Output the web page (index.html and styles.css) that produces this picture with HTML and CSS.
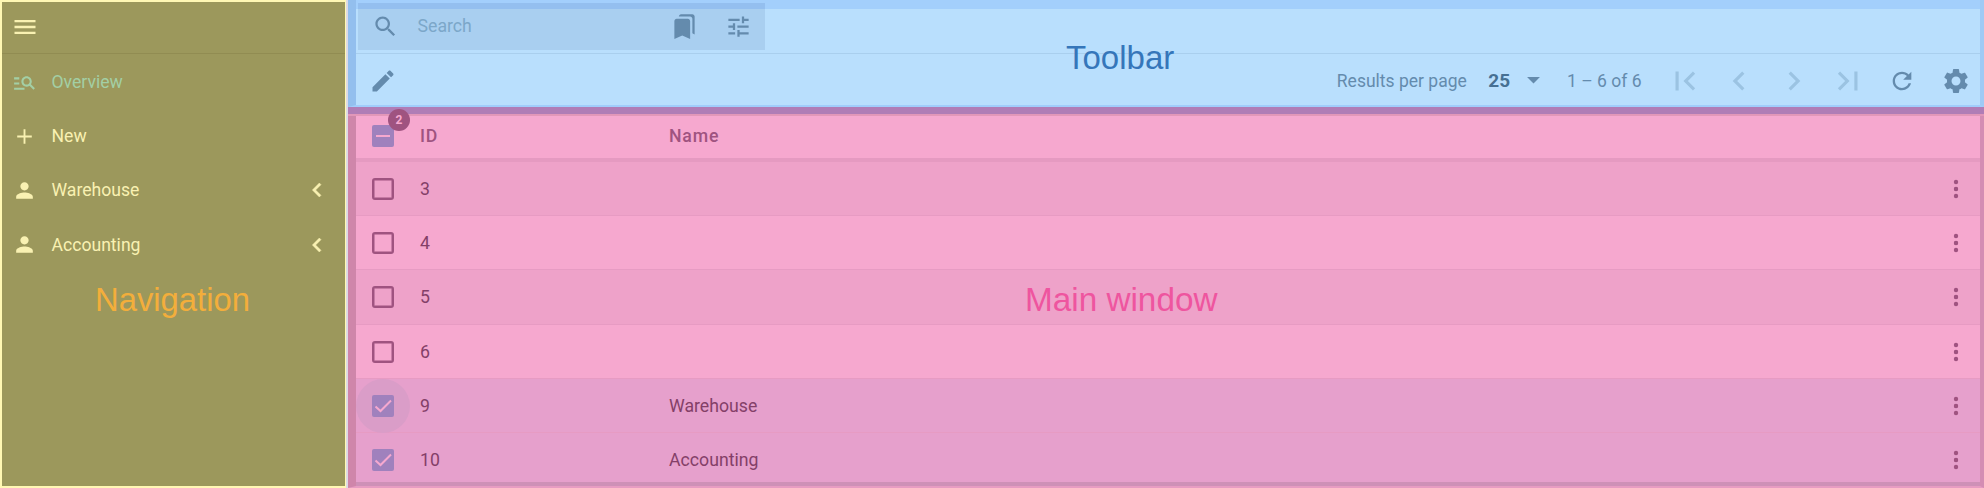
FILE: index.html
```
<!DOCTYPE html>
<html lang="en">
<head>
<meta charset="utf-8">
<title>Overview</title>
<link rel="stylesheet" href="styles.css">
</head>
<body>
<div class="app">
  <aside class="nav">
    <div class="nav-head"><svg class="icon" viewBox="0 0 24 24"><path d="M3 18h18v-2H3v2zm0-5h18v-2H3v2zm0-7v2h18V6H3z"/></svg></div>
    <nav class="nav-list">
      <a class="nav-item active"><svg class="icon" viewBox="0 0 24 24"><path d="M7 9H2V7h5v2zm0 3H2v2h5v-2zm13.600 7l-3.830-3.830c-.8.520-1.740.830-2.770.830-2.760 0-5-2.240-5-5s2.240-5 5-5 5 2.240 5 5c0 1.020-.31 1.970-.83 2.760L22 17.590 20.590 19zM17 11c0-1.650-1.350-3-3-3s-3 1.350-3 3 1.350 3 3 3 3-1.350 3-3zM2 19h10v-2H2v2z"/></svg><span>Overview</span></a>
      <a class="nav-item"><svg class="icon" viewBox="0 0 24 24"><path d="M19 12.900h-6.100V19h-1.800v-6.100H5v-1.800h6.100V5h1.800v6.100H19z"/></svg><span>New</span></a>
      <a class="nav-item"><svg class="icon" viewBox="0 0 24 24"><path d="M12 12c2.210 0 4-1.790 4-4s-1.790-4-4-4-4 1.790-4 4 1.790 4 4 4zm0 2c-2.670 0-8 1.340-8 4v2h16v-2c0-2.660-5.330-4-8-4z"/></svg><span>Warehouse</span><svg class="icon chevron" viewBox="0 0 24 24"><path d="M15.410 7.410 14 6l-6 6 6 6 1.410-1.410L10.830 12z"/></svg></a>
      <a class="nav-item"><svg class="icon" viewBox="0 0 24 24"><path d="M12 12c2.210 0 4-1.790 4-4s-1.790-4-4-4-4 1.790-4 4 1.790 4 4 4zm0 2c-2.670 0-8 1.340-8 4v2h16v-2c0-2.660-5.330-4-8-4z"/></svg><span>Accounting</span><svg class="icon chevron" viewBox="0 0 24 24"><path d="M15.410 7.410 14 6l-6 6 6 6 1.410-1.410L10.830 12z"/></svg></a>
    </nav>
    <div class="label label-nav">Navigation</div>
  </aside>
  <main class="content">
    <section class="toolbar">
      <div class="search-row">
        <div class="search">
          <svg class="icon" viewBox="0 0 24 24"><path d="M15.500 14h-.79l-.28-.27C15.410 12.590 16 11.110 16 9.500 16 5.910 13.090 3 9.500 3S3 5.910 3 9.500 5.910 16 9.500 16c1.610 0 3.090-.59 4.230-1.570l.27.28v.79l5 4.990L20.490 19l-4.990-5zm-6 0C7.010 14 5 11.990 5 9.500S7.010 5 9.500 5 14 7.010 14 9.500 11.990 14 9.500 14z"/></svg>
          <span class="placeholder">Search</span>
          <svg class="icon" viewBox="0 0 24 24"><path d="M19 18l2 1V3c0-1.100-.9-2-2-2H8.990C7.890 1 7 1.900 7 3h10c1.100 0 2 .9 2 2v13zM15 5H5c-1.100 0-2 .9-2 2v16l7-3 7 3V7c0-1.100-.9-2-2-2z"/></svg>
          <svg class="icon" viewBox="0 0 24 24"><path d="M3 17v2h6v-2H3zM3 5v2h10V5H3zm10 16v-2h8v-2h-8v-2h-2v6h2zM7 9v2H3v2h4v2h2V9H7zm14 4v-2H11v2h10zm-6-4h2V7h4V5h-4V3h-2v6z"/></svg>
        </div>
      </div>
      <div class="action-row">
        <svg class="icon edit" viewBox="0 0 24 24"><path d="M3 17.250V21h3.750L17.810 9.940l-3.750-3.750L3 17.250zM20.710 7.040c.39-.39.39-1.020 0-1.410l-2.340-2.340c-.39-.39-1.020-.39-1.410 0l-1.830 1.830 3.750 3.750 1.830-1.830z"/></svg>
        <div class="pager">
          <span class="per-page">Results per page</span>
          <strong class="size">25</strong>
          <svg class="icon caret" viewBox="0 0 24 24"><path d="M7 10l5 5 5-5z"/></svg>
          <span class="range">1 – 6 of 6</span>
          <svg class="icon big off" viewBox="0 0 24 24"><path d="M18.410 16.590L13.820 12l4.590-4.590L17 6l-6 6 6 6zM6 6h2v12H6z"/></svg>
          <svg class="icon big off" viewBox="0 0 24 24"><path d="M15.410 7.410 14 6l-6 6 6 6 1.410-1.410L10.830 12z"/></svg>
          <svg class="icon big off" viewBox="0 0 24 24"><path d="M10 6 8.590 7.410 13.170 12l-4.580 4.590L10 18l6-6z"/></svg>
          <svg class="icon big off" viewBox="0 0 24 24"><path d="M5.590 7.410L10.180 12l-4.590 4.590L7 18l6-6-6-6zM16 6h2v12h-2z"/></svg>
          <svg class="icon refresh" viewBox="0 0 24 24"><path d="M17.650 6.350C16.200 4.900 14.210 4 12 4c-4.420 0-7.990 3.580-7.990 8s3.570 8 7.990 8c3.730 0 6.840-2.550 7.730-6h-2.080c-.82 2.330-3.040 4-5.650 4-3.310 0-6-2.690-6-6s2.690-6 6-6c1.660 0 3.140.69 4.220 1.780L13 11h7V4l-2.350 2.350z"/></svg>
          <svg class="icon gear" viewBox="0 0 24 24"><path d="M19.140 12.940c.04-.3.060-.61.060-.94 0-.32-.02-.64-.07-.94l2.030-1.580c.18-.14.23-.41.120-.61l-1.920-3.320c-.12-.22-.37-.29-.59-.22l-2.390.96c-.5-.38-1.030-.7-1.620-.94l-.36-2.540c-.04-.24-.24-.41-.48-.41h-3.840c-.24 0-.43.170-.47.410l-.36 2.540c-.59.240-1.130.570-1.620.940l-2.390-.96c-.22-.08-.47 0-.59.220L2.740 8.870c-.12.210-.08.470.120.610l2.030 1.580c-.05.300-.09.630-.09.940s.02.640.07.940l-2.030 1.580c-.18.140-.23.410-.12.610l1.920 3.320c.12.220.370.290.590.220l2.390-.96c.5.380 1.030.700 1.620.940l.36 2.540c.05.240.240.410.480.410h3.840c.24 0 .44-.17.470-.41l.36-2.540c.59-.24 1.130-.56 1.620-.94l2.390.96c.22.080.470 0 .59-.22l1.920-3.320c.12-.22.070-.47-.12-.61l-2.010-1.580zM12 15.600c-1.980 0-3.600-1.620-3.600-3.600s1.620-3.600 3.600-3.600 3.600 1.620 3.600 3.600-1.620 3.600-3.600 3.600z"/></svg>
        </div>
      </div>
      <div class="label label-toolbar">Toolbar</div>
    </section>
    <section class="table">
      <div class="overlap"></div>
      <div class="row head"><div class="check"><i class="box on"><svg viewBox="0 0 22 22"><path d="M4 11h14"/></svg></i><b class="badge">2</b></div><span class="id">ID</span><span class="name">Name</span></div>
      <div class="row odd"><div class="check"><i class="box"></i></div><span class="id">3</span><span class="name"></span><i class="more"></i></div>
      <div class="row"><div class="check"><i class="box"></i></div><span class="id">4</span><span class="name"></span><i class="more"></i></div>
      <div class="row odd"><div class="check"><i class="box"></i></div><span class="id">5</span><span class="name"></span><i class="more"></i></div>
      <div class="row"><div class="check"><i class="box"></i></div><span class="id">6</span><span class="name"></span><i class="more"></i></div>
      <div class="row selected"><div class="check focus"><i class="box on"><svg viewBox="0 0 22 22"><path d="M3.500 11.500l5 4.500L19 5.500"/></svg></i></div><span class="id">9</span><span class="name">Warehouse</span><i class="more"></i></div>
      <div class="row selected last"><div class="check"><i class="box on"><svg viewBox="0 0 22 22"><path d="M3.500 11.500l5 4.500L19 5.500"/></svg></i></div><span class="id">10</span><span class="name">Accounting</span><i class="more"></i></div>
      <div class="label label-main">Main window</div>
    </section>
  </main>
</div>
</body>
</html>
```
FILE: styles.css
```
* { box-sizing: border-box; }
body { margin: 0; font-family: Roboto, sans-serif; font-size: 17.700px; }
.app { display: flex; width: 1984px; height: 488px; overflow: hidden; background: #dddbe4; }
.icon { width: 25px; height: 25px; fill: currentColor; flex: none; display: block; }

.nav { position: relative; width: 346px; height: 488px; margin-right: 2px; border: 2px solid #fff8b4; border-right: 1px solid #fff8b4; background: #9c985c; color: #f9f1b2; }
.nav-head { height: 52px; padding: 11px 0 0 8.500px; border-bottom: 1px solid #918c52; }
.nav-head .icon { width: 28px; height: 28px; }
.nav-list { padding-top: 1px; }
.nav-item { display: flex; align-items: center; height: 54.200px; padding: 0 14px 0 10px; font-size: 17.600px; }
.nav-item span { margin-left: 14.500px; }
.nav-item.active { color: #a3cfa5; }
.nav-item .chevron { width: 28px; height: 28px; margin-left: auto; stroke: currentColor; stroke-width: .4; }

.label { position: absolute; font: 33px "Liberation Sans", sans-serif; line-height: 38px; white-space: nowrap; }
.label-nav { left: 93px; top: 279px; font-size: 32.800px; color: #f3ae3b; }
.label-toolbar { left: 710px; top: 39px; color: #3576ba; }
.label-main { left: 669px; top: 174px; font-size: 33.300px; color: #ee559f; }

.content { width: 1636px; height: 488px; }
.toolbar { position: relative; height: 107px; border-left: 8px solid #93bfee; border-right: 4px solid #9fcaf5; border-bottom: 2px solid #a1cdfb; background: linear-gradient(#a3cffc 9px, #b9dffd 9px); color: #648bad; }
.search-row { height: 54px; padding: 3px 0 0 2px; border-bottom: 1px solid #a9cfee; }
.search { display: flex; align-items: center; width: 407px; height: 47px; padding: 0 13.500px; background: linear-gradient(#94bfef 6px, #a9cff0 6px); }
.search .icon { width: 27px; height: 27px; }
.placeholder { flex: 1; margin-left: 19px; padding-bottom: 2px; color: #7ca7c9; }
.search .icon + .icon { margin-left: 27px; }
.action-row { display: flex; align-items: center; justify-content: space-between; height: 54px; padding: 0 9px 0 12.500px; }
.edit { width: 28px; height: 28px; }
.pager { display: flex; align-items: center; font-size: 17.500px; }
.size { margin: 0 8px 0 21.500px; padding-bottom: 2px; font-size: 19px; font-weight: 700; color: #467093; }
.caret { width: 31px; height: 31px; margin-bottom: 3px; }
.range { margin: 0 24px 0 18px; }
.big { width: 38px; height: 38px; }
.big + .big { margin-left: 16.500px; }
.off { color: #9bc3e2; }
.refresh { width: 28px; height: 28px; margin-left: 21px; }
.gear { width: 30px; height: 30px; margin-left: 25px; }

.table { position: relative; height: 381px; border-left: 8px solid #cf86aa; border-right: 4px solid #d48db3; border-bottom: 2px solid #e79cc2; background: #f6a8cf; color: #843f68; }
.overlap { height: 9px; margin: 0 -4px 0 -8px; border-bottom: 2px solid #e297b9; background: #b07db6; }
.row { display: flex; align-items: center; height: 54.200px; padding: 1px 14px 0 0; border-bottom: 1px solid #e79bc3; }
.row.head { height: 46px; padding-top: 0; padding-bottom: 3px; border-bottom: 4px solid #e59ac1; color: #9f5380; font-weight: 500; letter-spacing: .8px; }
.odd { background: #eea2c9; }
.selected { background: #e6a0cc; }
.row.last { height: 53px; padding-top: 6px; border-bottom: 4px solid #ce91b7; }
.check { position: relative; width: 54px; height: 54px; display: grid; place-items: center; flex: none; }
.focus { border-radius: 50%; background: #da9dc8; }
.box { display: block; width: 22px; height: 22px; border: 2px solid #9f5380; border-radius: 3px; box-shadow: inset 0 0 0 .500px #9f5380; }
.box.on { border: 0; border-radius: 2px; box-shadow: none; background: #a081bd; }
.box svg { display: block; fill: none; stroke: #f6a8cf; stroke-width: 2; }
.badge { position: absolute; left: 32px; top: 0; width: 22px; height: 22px; border-radius: 50%; background: #9f5380; color: #f6a8cf; font-size: 12px; line-height: 22px; letter-spacing: 0; text-align: center; }
.id { width: 249px; margin-left: 10px; }
.name { flex: 1; margin-left: 0; }
.more { width: 4px; height: 4px; margin-right: 8px; border-radius: 50%; background: #9f5380; box-shadow: 0 -7px 0 .200px #9f5380, 0 7px 0 .200px #9f5380, 0 0 0 .200px #9f5380; }
```
